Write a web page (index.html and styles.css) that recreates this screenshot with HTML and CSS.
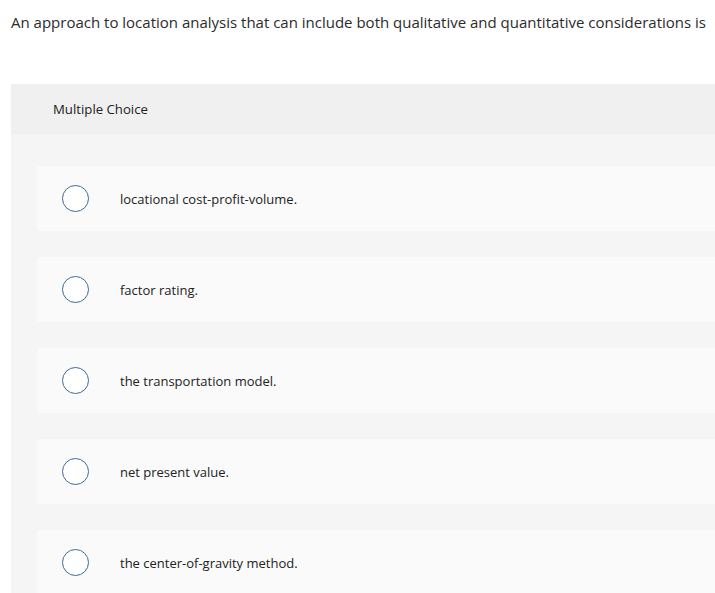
FILE: index.html
```html
<!DOCTYPE html>
<html>
<head>
<meta charset="utf-8">
<link rel="stylesheet" href="styles.css">
</head>
<body>
<p class="question">An approach to location analysis that can include both qualitative and quantitative considerations is</p>
<div class="mc">
  <div class="mc-head">Multiple Choice</div>
  <div class="mc-body">
    <div class="option"><span class="radio"></span><span class="label">locational cost-profit-volume.</span></div>
    <div class="option"><span class="radio"></span><span class="label">factor rating.</span></div>
    <div class="option"><span class="radio"></span><span class="label">the transportation model.</span></div>
    <div class="option"><span class="radio"></span><span class="label">net present value.</span></div>
    <div class="option"><span class="radio"></span><span class="label">the center-of-gravity method.</span></div>
  </div>
</div>
</body>
</html>
```
FILE: styles.css
```css
html, body {
  margin: 0;
  padding: 0;
  background: #fff;
  font-family: "Open Sans", "Lato", sans-serif;
  color: #333;
}
html {
  height: 593px;
  overflow: hidden;
}
.question {
  margin: 0;
  padding: 12px 0 0 11px;
  font-size: 15px;
  line-height: 20px;
  white-space: nowrap;
  color: #2b2b2b;
}
.mc {
  margin: 52px 0 0 11px;
}
.mc-head {
  height: 50px;
  background: #f0f0f0;
  display: flex;
  align-items: center;
  padding-left: 42px;
  font-size: 13.2px;
  color: #222;
}
.mc-body {
  background: #f5f5f5;
  padding: 32px 0 0 26px;
  display: flex;
  flex-direction: column;
  gap: 26px;
}
.option {
  height: 65px;
  background: #fafafa;
  border-radius: 3px 0 0 3px;
  display: flex;
  align-items: center;
  padding-left: 25px;
}
.radio {
  width: 25px;
  height: 25px;
  border: 1.5px solid #3d6a96;
  border-radius: 50%;
  background: #fff;
  flex: none;
}
.label {
  margin-left: 31px;
  padding-top: 1px;
  font-size: 13px;
  color: #222;
}
```
